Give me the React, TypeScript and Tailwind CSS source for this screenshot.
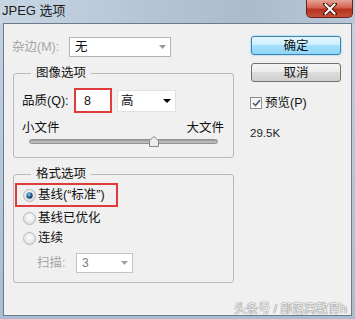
import React from "react";

function Arrow({ color = "#000", w = 8, h = 4 }: { color?: string; w?: number; h?: number }) {
  return (
    <svg width={w} height={h} viewBox={`0 0 ${w} ${h}`}>
      <polygon points={`0,0 ${w},0 ${w / 2},${h}`} fill={color} />
    </svg>
  );
}

function Radio({ checked }: { checked?: boolean }) {
  return (
    <svg width="13" height="13" viewBox="0 0 13 13">
      <defs>
        <radialGradient id={checked ? "rg1" : "rg0"} cx="50%" cy="40%" r="60%">
          <stop offset="0%" stopColor="#ffffff" />
          <stop offset="100%" stopColor="#dcdcdc" />
        </radialGradient>
        <radialGradient id="dot" cx="40%" cy="35%" r="70%">
          <stop offset="0%" stopColor="#8fd0ff" />
          <stop offset="60%" stopColor="#1f5f8f" />
          <stop offset="100%" stopColor="#0e3555" />
        </radialGradient>
      </defs>
      <circle cx="6.5" cy="6.5" r="6" fill={`url(#${checked ? "rg1" : "rg0"})`} stroke="#b9b9b9" strokeWidth="1" />
      {checked && <circle cx="6.5" cy="6.5" r="3.2" fill="url(#dot)" />}
    </svg>
  );
}

export default function App() {
  return (
    <div className="relative w-[355px] h-[319px] flex flex-col overflow-hidden bg-[linear-gradient(180deg,#c3d2e1,#aabdd0)] px-[3px] pb-[3px] font-['Liberation_Sans','Noto_Sans_CJK_SC',sans-serif] text-[12.5px] text-[#111]">
      {/* Title bar */}
      <div className="h-[23px] flex items-start justify-between bg-[linear-gradient(90deg,#c8d6e4,#b4c5d6_40%,#a9bbcd_70%,#b8c8d8)] -mx-[3px] pl-[2px] pr-[2px]">
        <div className="pt-[2px] leading-[18px] text-[13px] text-[#1b1b1b]">JPEG 选项</div>
        <div className="w-[47px] h-[18px] rounded-b-[5px] border border-t-0 border-[#6e2219] bg-[linear-gradient(180deg,#e6a497,#d4634f_45%,#b8321e_55%,#c4503a)] flex items-center justify-center">
          <svg width="14" height="12" viewBox="0 0 14 12">
            <path d="M2 1 L12 11 M12 1 L2 11" stroke="#4a1a12" strokeWidth="4" strokeLinecap="square" />
            <path d="M2.5 1.5 L11.5 10.5 M11.5 1.5 L2.5 10.5" stroke="#ffffff" strokeWidth="2" strokeLinecap="square" />
          </svg>
        </div>
      </div>

      {/* Content */}
      <div className="flex-1 border border-[#6b7b8d] bg-[#f0f0f0] flex">
        {/* Left column */}
        <div className="ml-[8px] w-[222px] flex flex-col">
          <div className="mt-[13px] h-[20px] flex items-center">
            <div className="w-[57px] text-[#a6a6a6] leading-[16px]">杂边(M):</div>
            <div className="w-[102px] h-[20px] border border-[#b3b3b3] bg-white flex items-center pl-[5px] pr-[4px] justify-between">
              <span className="leading-[16px]">无</span>
              <Arrow color="#9a9a9a" w={7} h={4} />
            </div>
          </div>

          <fieldset className="mt-[8px] ml-[1px] border border-[#b9b9b9] rounded-[3px] pb-[10px]">
            <legend className="ml-[17px] px-[5px] leading-[16px]">图像选项</legend>
            <div className="mt-[7px] h-[25px] flex items-center pl-[8px]">
              <div className="w-[52px] leading-[16px]">品质(Q):</div>
              <div className="w-[38px] h-[25px] border-2 border-[#e03a3a] bg-white flex items-center pl-[8px] leading-[16px]">8</div>
              <div className="ml-[5px] w-[59px] h-[22px] bg-white border border-[#e2e2e2] flex items-center justify-between pl-[3px] pr-[4px]">
                <span className="leading-[16px]">高</span>
                <Arrow color="#000" w={8} h={4} />
              </div>
            </div>
            <div className="mt-[7px] flex justify-between pl-[8px] pr-[9px] leading-[16px]">
              <span>小文件</span>
              <span>大文件</span>
            </div>
            <div className="relative h-[11px] flex items-center ml-[15px] w-[189px]">
              <div className="w-full h-[5px] rounded-[3px] border border-[#8f8f8f] bg-[linear-gradient(180deg,#9a9a9a,#c9c9c9)]" />
              <svg className="absolute left-[120px] top-0" width="10" height="11" viewBox="0 0 10 11">
                <path d="M5 0.5 L9.5 4.5 L9.5 10.5 L0.5 10.5 L0.5 4.5 Z" fill="#ececec" stroke="#8a8a8a" strokeWidth="1" />
              </svg>
            </div>
          </fieldset>

          <fieldset className="mt-[8px] ml-[1px] border border-[#b9b9b9] rounded-[3px] pb-[9px]">
            <legend className="ml-[17px] px-[5px] leading-[16px]">格式选项</legend>
            <div className="mt-[1px] ml-[1px] w-[103px] h-[24px] border-2 border-[#e03a3a] flex items-center pl-[6px]">
              <Radio checked />
              <span className="ml-[2px] leading-[16px]">基线(“标准”)</span>
            </div>
            <div className="mt-[1px] h-[20px] flex items-center pl-[9px]">
              <Radio />
              <span className="ml-[2px] leading-[16px]">基线已优化</span>
            </div>
            <div className="h-[20px] flex items-center pl-[9px]">
              <Radio />
              <span className="ml-[2px] leading-[16px]">连续</span>
            </div>
            <div className="mt-[5px] h-[20px] flex items-center pl-[23px]">
              <div className="w-[39px] text-[#a6a6a6] leading-[16px]">扫描:</div>
              <div className="w-[57px] h-[20px] border border-[#c4c4c4] bg-white flex items-center justify-between pl-[5px] pr-[4px]">
                <span className="text-[#7a7a7a] leading-[16px] text-[12px]">3</span>
                <Arrow color="#a0a0a0" w={7} h={4} />
              </div>
            </div>
          </fieldset>
        </div>

        {/* Right column */}
        <div className="ml-[17px] w-[90px] flex flex-col">
          <div className="mt-[12px] h-[19px] rounded-[3px] border border-[#3c7fb1] bg-[linear-gradient(180deg,#e5f6fe,#c9eefd_50%,#a4e0fa_50%,#8fd6f7)] shadow-[0_0_2px_#5cc6f2] flex items-center justify-center leading-[16px]">确定</div>
          <div className="mt-[8px] h-[19px] rounded-[3px] border border-[#707070] bg-[linear-gradient(180deg,#f4f4f4,#ebebeb_50%,#dddddd_50%,#cfcfcf)] flex items-center justify-center leading-[16px]">取消</div>
          <div className="mt-[13px] -ml-[1px] h-[16px] flex items-center">
            <div className="w-[12px] h-[12px] border border-[#8e8f8f] bg-[linear-gradient(180deg,#f2f2f2,#ffffff)] flex items-center justify-center">
              <svg width="9" height="8" viewBox="0 0 9 8">
                <path d="M1 4 L3.5 6.5 L8 1" stroke="#4d5a75" strokeWidth="1.6" fill="none" />
              </svg>
            </div>
            <span className="ml-[3px] leading-[16px]">预览(P)</span>
          </div>
          <div className="mt-[14px] -ml-[1px] leading-[16px] text-[11.5px] text-[#222]">29.5K</div>
        </div>
      </div>

      {/* Watermark */}
      <div className="absolute right-[8px] bottom-[3px] text-[12px] leading-[14px] text-[#f6f6f6] [text-shadow:0_0_1px_#6d6d6d,0_0_1px_#6d6d6d]">
        头条号 / 部落窝教育h
      </div>
    </div>
  );
}
